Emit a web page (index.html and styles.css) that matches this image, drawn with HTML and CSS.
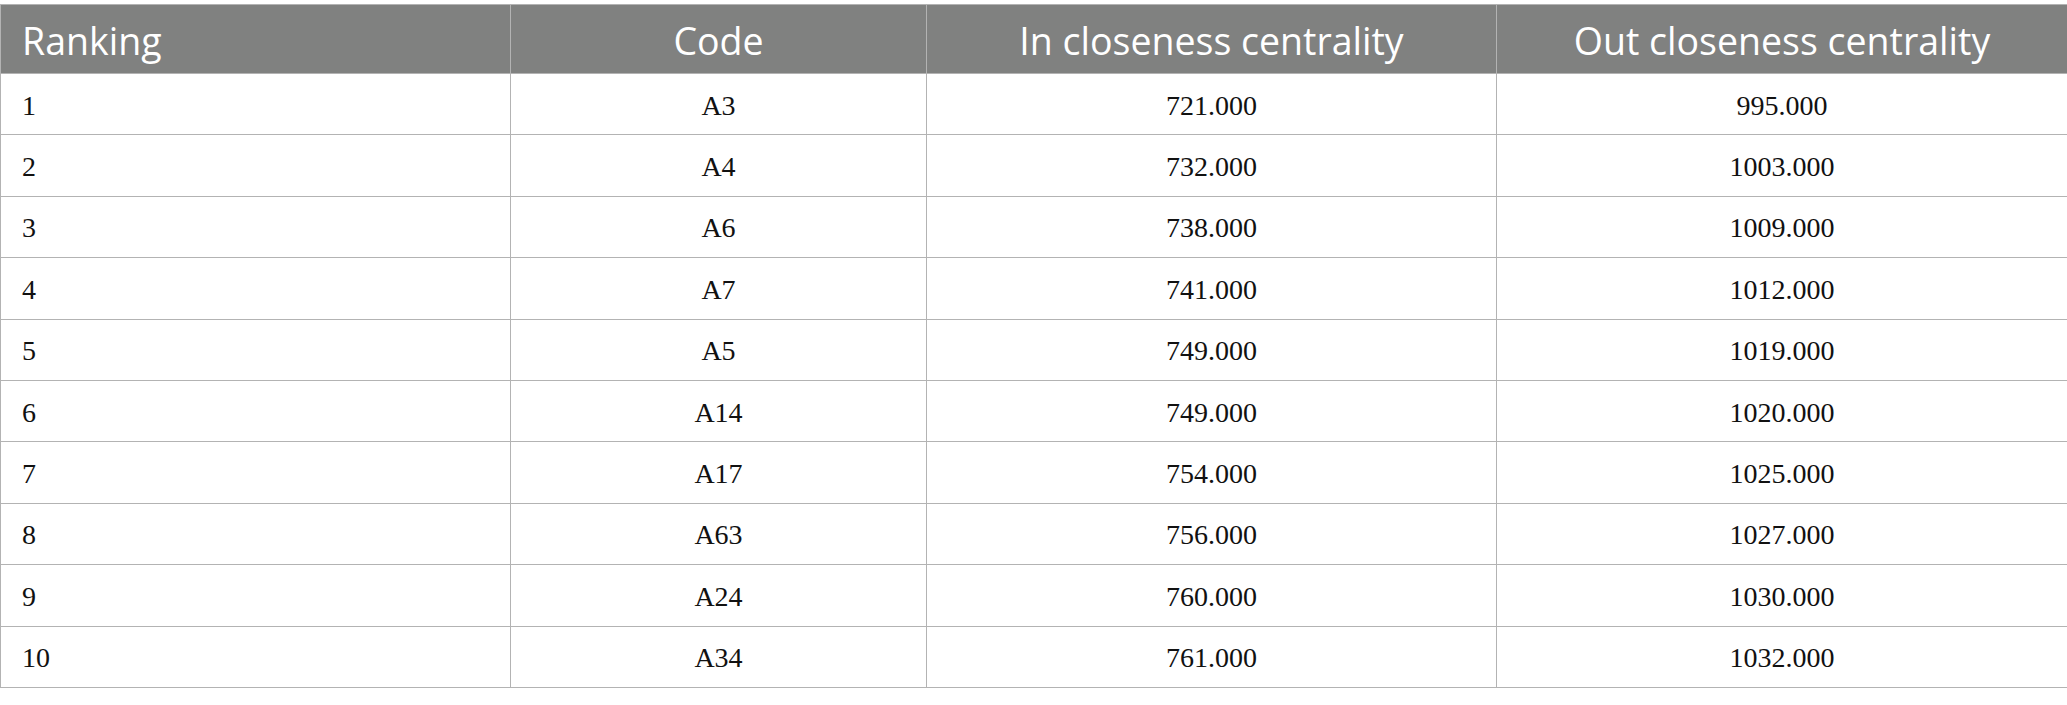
FILE: index.html
```html
<!DOCTYPE html>
<html>
<head>
<meta charset="utf-8">
<link rel="stylesheet" href="styles.css">
</head>
<body>
<table class="data">
  <colgroup>
    <col class="c1"><col class="c2"><col class="c3"><col class="c4">
  </colgroup>
  <thead>
    <tr>
      <th class="left">Ranking</th>
      <th>Code</th>
      <th>In closeness centrality</th>
      <th>Out closeness centrality</th>
    </tr>
  </thead>
  <tbody>
    <tr><td class="left">1</td><td>A3</td><td>721.000</td><td>995.000</td></tr>
    <tr><td class="left">2</td><td>A4</td><td>732.000</td><td>1003.000</td></tr>
    <tr><td class="left">3</td><td>A6</td><td>738.000</td><td>1009.000</td></tr>
    <tr><td class="left">4</td><td>A7</td><td>741.000</td><td>1012.000</td></tr>
    <tr><td class="left">5</td><td>A5</td><td>749.000</td><td>1019.000</td></tr>
    <tr><td class="left">6</td><td>A14</td><td>749.000</td><td>1020.000</td></tr>
    <tr><td class="left">7</td><td>A17</td><td>754.000</td><td>1025.000</td></tr>
    <tr><td class="left">8</td><td>A63</td><td>756.000</td><td>1027.000</td></tr>
    <tr><td class="left">9</td><td>A24</td><td>760.000</td><td>1030.000</td></tr>
    <tr><td class="left">10</td><td>A34</td><td>761.000</td><td>1032.000</td></tr>
  </tbody>
</table>
</body>
</html>
```
FILE: styles.css
```css
html, body {
  margin: 0;
  padding: 0;
  background: #ffffff;
}

body {
  padding-top: 4px;
}

.data {
  width: 2067px;
  border-collapse: collapse;
  table-layout: fixed;
}

.c1 { width: 510px; }
.c2 { width: 416px; }
.c3 { width: 570px; }
.c4 { width: 571px; }

.data th,
.data td {
  border: 1px solid #b3b3b3;
  text-align: center;
  vertical-align: middle;
  padding: 0 20px;
}

.data th {
  background: #808180;
  color: #ffffff;
  font-family: "Open Sans", "Noto Sans", sans-serif;
  font-weight: 400;
  font-size: 37.5px;
  height: 69px;
  box-sizing: border-box;
  padding-top: 2px;
}

.data td {
  font-family: "Liberation Serif", "Times New Roman", serif;
  font-size: 28px;
  color: #111111;
  height: 61.4px;
  box-sizing: border-box;
  padding-top: 3px;
}

.data .left {
  text-align: left;
  padding-left: 21px;
}
```
